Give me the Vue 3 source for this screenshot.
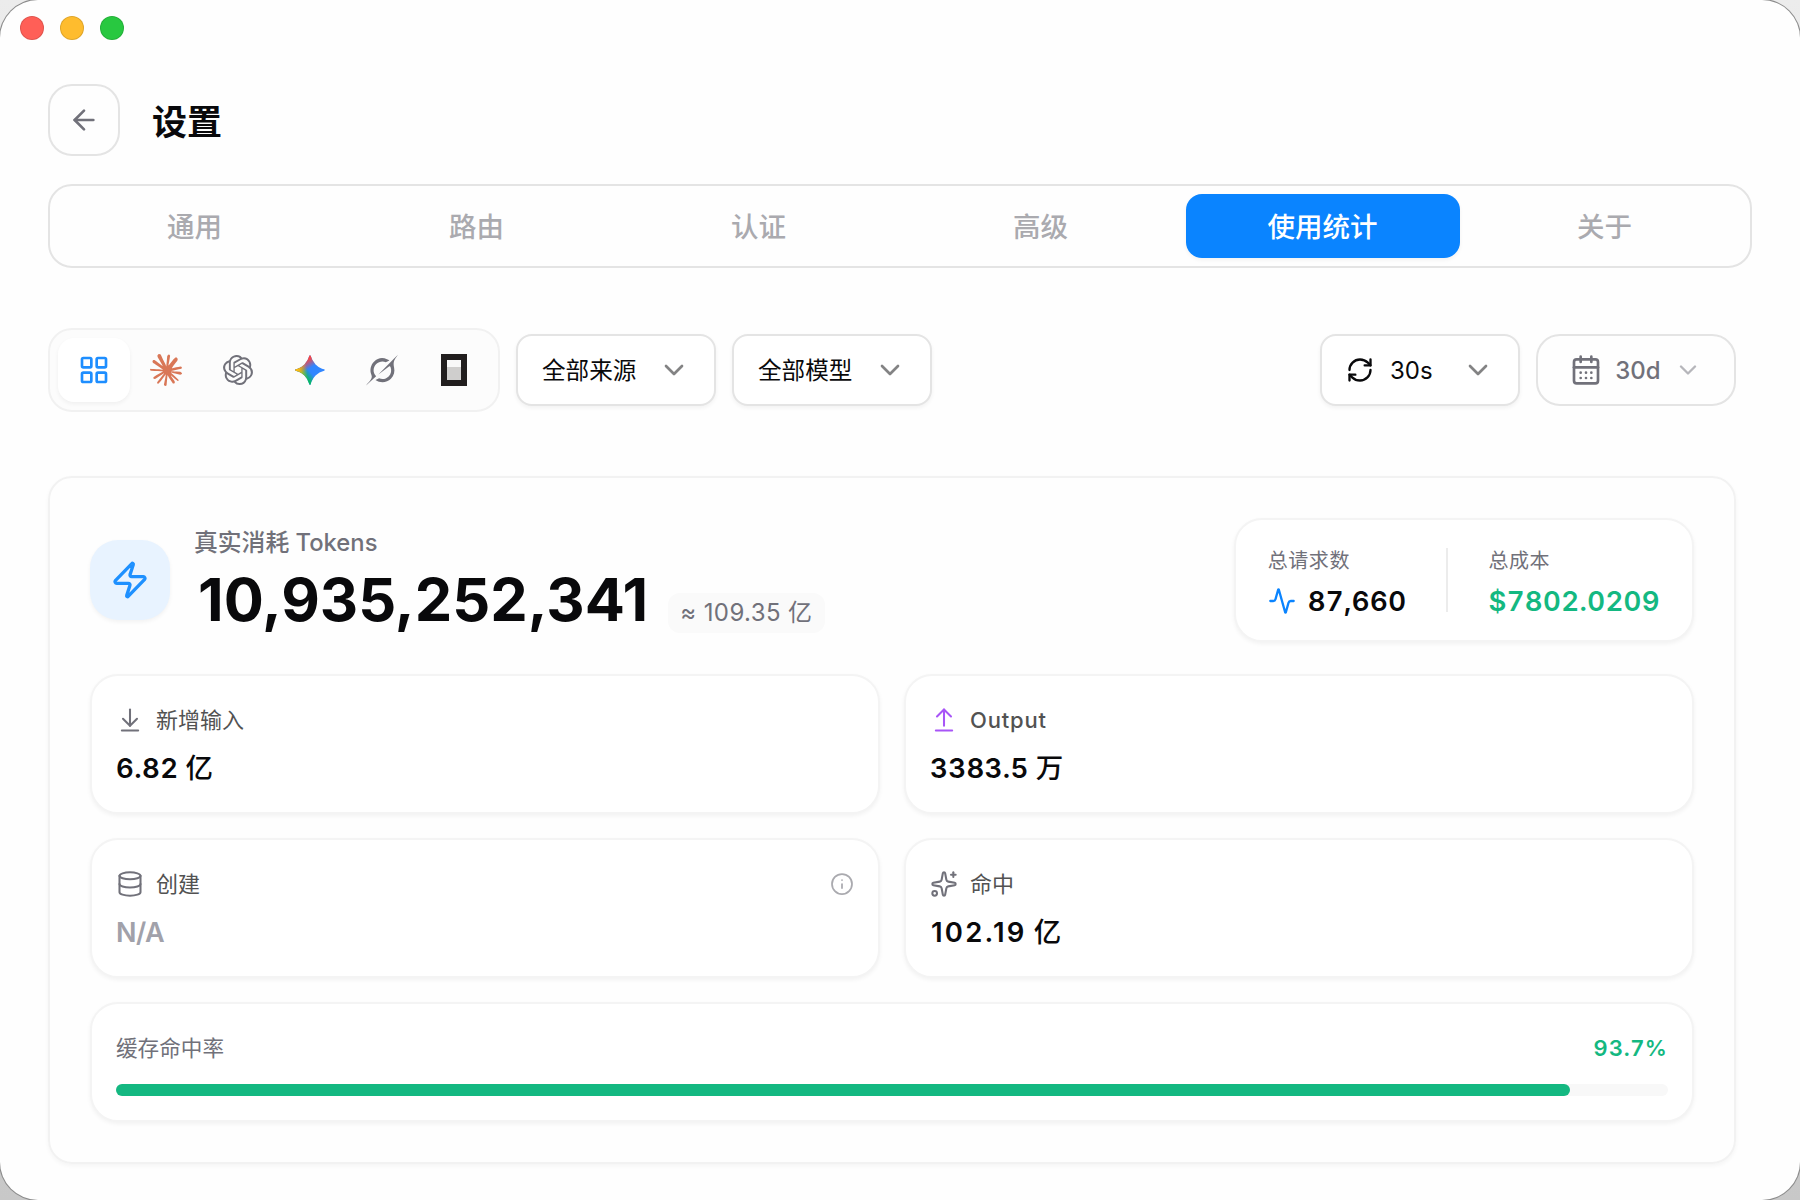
<template>
  <div class="desktop">
    <div class="window">
      <div class="titlebar">
        <span class="light red"></span>
        <span class="light yellow"></span>
        <span class="light green"></span>
      </div>

      <header class="header">
        <button class="back">
          <svg class="icon s32" viewBox="0 0 24 24">
            <path d="m12 19-7-7 7-7" />
            <path d="M19 12H5" />
          </svg>
        </button>
        <h1>设置</h1>
      </header>

      <nav class="tabs">
        <button
          v-for="tab in tabs"
          :key="tab"
          class="tab"
          :class="{ active: tab === activeTab }"
          @click="activeTab = tab"
        >
          {{ tab }}
        </button>
      </nav>

      <main class="content">
        <div class="toolbar">
          <div class="apps">
            <button class="app active">
              <svg class="icon s32" viewBox="0 0 24 24">
                <rect width="7" height="7" x="3" y="3" rx="1" />
                <rect width="7" height="7" x="14" y="3" rx="1" />
                <rect width="7" height="7" x="14" y="14" rx="1" />
                <rect width="7" height="7" x="3" y="14" rx="1" />
              </svg>
            </button>
            <button class="app">
              <svg class="brand claude" viewBox="0 0 24 24"><path :d="claudePath" /></svg>
            </button>
            <button class="app">
              <svg class="brand openai" viewBox="0 0 24 24"><path :d="openaiPath" /></svg>
            </button>
            <button class="app">
              <svg class="brand" viewBox="0 0 24 24">
                <defs>
                  <linearGradient id="gGreen" x1="7" y1="15.5" x2="11" y2="12" gradientUnits="userSpaceOnUse">
                    <stop stop-color="#08b962" />
                    <stop offset="1" stop-color="#08b962" stop-opacity="0" />
                  </linearGradient>
                  <linearGradient id="gRed" x1="8" y1="5.5" x2="11.5" y2="11" gradientUnits="userSpaceOnUse">
                    <stop stop-color="#f94543" />
                    <stop offset="1" stop-color="#f94543" stop-opacity="0" />
                  </linearGradient>
                  <linearGradient id="gYellow" x1="3.5" y1="13.5" x2="17.5" y2="12" gradientUnits="userSpaceOnUse">
                    <stop stop-color="#fabc12" />
                    <stop offset="0.46" stop-color="#fabc12" stop-opacity="0" />
                  </linearGradient>
                </defs>
                <path :d="geminiPath" fill="#3186ff" />
                <path :d="geminiPath" fill="url(#gGreen)" />
                <path :d="geminiPath" fill="url(#gRed)" />
                <path :d="geminiPath" fill="url(#gYellow)" />
              </svg>
            </button>
            <button class="app">
              <svg class="brand grok" viewBox="0 0 24 24"><path :d="grokPath" /></svg>
            </button>
            <button class="app">
              <svg class="brand" viewBox="0 0 32 32">
                <path d="M3 0h26v32H3z" fill="#211e1e" />
                <path d="M9 6h14v7H9z" fill="#f8f8f8" />
                <path d="M9 13h14v13H9z" fill="#cfcecd" />
              </svg>
            </button>
          </div>

          <button v-for="s in selects" :key="s" class="select">
            <span class="selectText">{{ s }}</span>
            <svg class="icon s32 chevron" viewBox="0 0 24 24"><path d="m6 9 6 6 6-6" /></svg>
          </button>

          <button class="select refresh">
            <svg class="icon s28" viewBox="0 0 24 24">
              <path d="M3 12a9 9 0 0 1 9-9 9.75 9.75 0 0 1 6.74 2.74L21 8" />
              <path d="M21 3v5h-5" />
              <path d="M21 12a9 9 0 0 1-9 9 9.75 9.75 0 0 1-6.74-2.74L3 16" />
              <path d="M8 16H3v5" />
            </svg>
            <span>30s</span>
            <svg class="icon s32 chevron" viewBox="0 0 24 24"><path d="m6 9 6 6 6-6" /></svg>
          </button>

          <button class="range">
            <svg class="icon s32" viewBox="0 0 24 24">
              <path d="M8 2v4M16 2v4" />
              <rect width="18" height="18" x="3" y="4" rx="2" />
              <path d="M3 10h18" />
              <path d="M8 14h.01M12 14h.01M16 14h.01M8 18h.01M12 18h.01M16 18h.01" />
            </svg>
            <span>30d</span>
            <svg class="icon s28 chevron" viewBox="0 0 24 24"><path d="m6 9 6 6 6-6" /></svg>
          </button>
        </div>

        <section class="panel">
          <div class="summary">
            <div class="zap">
              <svg class="icon s40" viewBox="0 0 24 24">
                <path
                  d="M4 14a1 1 0 0 1-.78-1.63l9.9-10.2a.5.5 0 0 1 .86.46l-1.92 6.02A1 1 0 0 0 13 10h7a1 1 0 0 1 .78 1.63l-9.9 10.2a.5.5 0 0 1-.86-.46l1.92-6.02A1 1 0 0 0 11 14z"
                />
              </svg>
            </div>
            <div class="total">
              <div class="totalLabel">真实消耗 Tokens</div>
              <div class="totalRow">
                <span class="totalValue">10,935,252,341</span>
                <span class="approx">≈ 109.35 亿</span>
              </div>
            </div>
            <div class="figures">
              <div class="figure">
                <div class="figureLabel">总请求数</div>
                <div class="figureValue">
                  <svg class="icon s28 blue" viewBox="0 0 24 24">
                    <path
                      d="M22 12h-2.48a2 2 0 0 0-1.93 1.46l-2.35 8.36a.25.25 0 0 1-.48 0L9.24 2.18a.25.25 0 0 0-.48 0l-2.35 8.36A2 2 0 0 1 4.49 12H2"
                    />
                  </svg>
                  <span>87,660</span>
                </div>
              </div>
              <div class="divider"></div>
              <div class="figure">
                <div class="figureLabel">总成本</div>
                <div class="figureValue cost">$7802.0209</div>
              </div>
            </div>
          </div>

          <div class="grid">
            <div v-for="card in cards" :key="card.label" class="card">
              <div class="cardLabel">
                <svg class="icon s28" :class="card.tone" viewBox="0 0 24 24">
                  <path v-for="d in card.paths" :key="d" :d="d" />
                </svg>
                <span :class="{ latin: card.label === 'Output' }">{{ card.label }}</span>
                <svg v-if="card.info" class="icon s24 info" viewBox="0 0 24 24">
                  <circle cx="12" cy="12" r="10" />
                  <path d="M12 16v-4" />
                  <path d="M12 8h.01" />
                </svg>
              </div>
              <div class="cardValue" :class="{ empty: !card.unit, wide: card.wide }">
                {{ card.value }}<span v-if="card.unit" class="unit">{{ card.unit }}</span>
              </div>
            </div>
          </div>

          <div class="card">
            <div class="rateRow">
              <span class="rateLabel">缓存命中率</span>
              <span class="rate">{{ hitRate }}%</span>
            </div>
            <div class="track">
              <div class="fill" :style="{ width: hitRate + '%' }"></div>
            </div>
          </div>
        </section>
      </main>
    </div>
  </div>
</template>

<script setup>
import { ref } from "vue";

const tabs = ["通用", "路由", "认证", "高级", "使用统计", "关于"];
const activeTab = ref("使用统计");
const selects = ["全部来源", "全部模型"];
const hitRate = ref(93.7);

const cards = [
  {
    label: "新增输入",
    value: "6.82",
    unit: "亿",
    paths: ["M12 17V3", "m6 11 6 6 6-6", "M19 21H5"],
  },
  {
    label: "Output",
    value: "3383.5",
    unit: "万",
    tone: "purple",
    paths: ["m18 9-6-6-6 6", "M12 3v14", "M5 21h14"],
  },
  {
    label: "创建",
    value: "N/A",
    info: true,
    paths: [
      "M3 5a9 3 0 1 0 18 0a9 3 0 1 0-18 0",
      "M3 5v14a9 3 0 0 0 18 0V5",
      "M3 12a9 3 0 0 0 18 0",
    ],
  },
  {
    label: "命中",
    value: "102.19",
    unit: "亿",
    wide: true,
    paths: [
      "M11.017 2.814a1 1 0 0 1 1.966 0l1.051 5.558a2 2 0 0 0 1.594 1.594l5.558 1.051a1 1 0 0 1 0 1.966l-5.558 1.051a2 2 0 0 0-1.594 1.594l-1.051 5.558a1 1 0 0 1-1.966 0l-1.051-5.558a2 2 0 0 0-1.594-1.594l-5.558-1.051a1 1 0 0 1 0-1.966l5.558-1.051a2 2 0 0 0 1.594-1.594z",
      "M20 2v4",
      "M22 4h-4",
      "M2 20a2 2 0 1 0 4 0a2 2 0 1 0-4 0",
    ],
  },
];

// 各应用图标
const claudePath =
  "m4.7144 15.9555 4.7174-2.6471.079-.2307-.079-.1275h-.2307l-.7893-.0486-2.6956-.0729-2.3375-.0971-2.2646-.1214-.5707-.1215-.5343-.7042.0546-.3522.4797-.3218.686.0608 1.5179.1032 2.2767.1578 1.6514.0972 2.4468.255h.3886l.0546-.1579-.1336-.0971-.1032-.0972L6.973 9.8356l-2.55-1.6879-1.3356-.9714-.7225-.4918-.3643-.4614-.1578-1.0078.6557-.7225.8803.0607.2246.0607.8925.686 1.9064 1.4754 2.4893 1.8336.3643.3035.1457-.1032.0182-.0728-.164-.2733-1.3539-2.4467-1.445-2.4893-.6435-1.032-.17-.6194c-.0607-.255-.1032-.4674-.1032-.7285L6.287.1335 6.6997 0l.9957.1336.419.3642.6192 1.4147 1.0018 2.2282 1.5543 3.0296.4553.8985.2429.8318.091.255h.1579v-.1457l.1275-1.706.2368-2.0947.2307-2.6957.0789-.7589.3764-.9107.7468-.4918.5828.2793.4797.686-.0668.4433-.2853 1.8517-.5586 2.9021-.3643 1.9429h.2125l.2429-.2429.9835-1.3053 1.6514-2.0643.7286-.8196.85-.9046.5464-.4311h1.0321l.759 1.1293-.34 1.1657-1.0625 1.3478-.8804 1.1414-1.2628 1.7-.7893 1.36.0729.1093.1882-.0183 2.8535-.607 1.5421-.2794 1.8396-.3157.8318.3886.091.3946-.3278.8075-1.967.4857-2.3072.4614-3.4364.8136-.0425.0304.0486.0607 1.5482.1457.6618.0364h1.621l3.0175.2247.7892.522.4736.6376-.079.4857-1.2142.6193-1.6393-.3886-3.825-.9107-1.3113-.3279h-.1822v.1093l1.0929 1.0686 2.0035 1.8092 2.5075 2.3314.1275.5768-.3218.4554-.34-.0486-2.2039-1.6575-.85-.7468-1.9246-1.621h-.1275v.17l.4432.6496 2.3436 3.5214.1214 1.0807-.17.3521-.6071.2125-.6679-.1214-1.3721-1.9246L14.38 17.959l-1.1414-1.9428-.1397.079-.674 7.2552-.3156.3703-.7286.2793-.6071-.4614-.3218-.7468.3218-1.4753.3886-1.9246.3157-1.53.2853-1.9004.17-.6314-.0121-.0425-.1397.0182-1.4328 1.9672-2.1796 2.9446-1.7243 1.8456-.4128.164-.7164-.3704.0667-.6618.4008-.5889 2.386-3.0357 1.4389-1.882.929-1.0868-.0062-.1579h-.0546l-6.3385 4.1164-1.1293.1457-.4857-.4554.0608-.7467.2307-.2429 1.9064-1.3114Z";
const openaiPath =
  "M22.2819 9.8211a5.9847 5.9847 0 0 0-.5157-4.9108 6.0462 6.0462 0 0 0-6.5098-2.9A6.0651 6.0651 0 0 0 4.9807 4.1818a5.9847 5.9847 0 0 0-3.9977 2.9 6.0462 6.0462 0 0 0 .7427 7.0966 5.98 5.98 0 0 0 .511 4.9107 6.051 6.051 0 0 0 6.5146 2.9001A5.9847 5.9847 0 0 0 13.2599 24a6.0557 6.0557 0 0 0 5.7718-4.2058 5.9894 5.9894 0 0 0 3.9977-2.9001 6.0557 6.0557 0 0 0-.7475-7.0729zm-9.022 12.6081a4.4755 4.4755 0 0 1-2.8764-1.0408l.1419-.0804 4.7783-2.7582a.7948.7948 0 0 0 .3927-.6813v-6.7369l2.02 1.1686a.071.071 0 0 1 .038.052v5.5826a4.504 4.504 0 0 1-4.4945 4.4944zm-9.6607-4.1254a4.4708 4.4708 0 0 1-.5346-3.0137l.142.0852 4.783 2.7582a.7712.7712 0 0 0 .7806 0l5.8428-3.3685v2.3324a.0804.0804 0 0 1-.0332.0615L9.74 19.9502a4.4992 4.4992 0 0 1-6.1408-1.6464zM2.3408 7.8956a4.485 4.485 0 0 1 2.3655-1.9728V11.6a.7664.7664 0 0 0 .3879.6765l5.8144 3.3543-2.0201 1.1685a.0757.0757 0 0 1-.071 0l-4.8303-2.7865A4.504 4.504 0 0 1 2.3408 7.872zm16.5963 3.8558L13.1038 8.364 15.1192 7.2a.0757.0757 0 0 1 .071 0l4.8303 2.7913a4.4944 4.4944 0 0 1-.6765 8.1042v-5.6772a.79.79 0 0 0-.407-.667zm2.0107-3.0231l-.142-.0852-4.7735-2.7818a.7759.7759 0 0 0-.7854 0L9.409 9.2297V6.8974a.0662.0662 0 0 1 .0284-.0615l4.8303-2.7866a4.4992 4.4992 0 0 1 6.6802 4.66zM8.3065 12.863l-2.02-1.1638a.0804.0804 0 0 1-.038-.0567V6.0742a4.4992 4.4992 0 0 1 7.3757-3.4537l-.142.0805L8.704 5.459a.7948.7948 0 0 0-.3927.6813zm1.0976-2.3654l2.602-1.4998 2.6069 1.4998v2.9994l-2.5974 1.4997-2.6067-1.4997Z";
const geminiPath =
  "M20.616 10.835a14.147 14.147 0 01-4.45-3.001 14.111 14.111 0 01-3.678-6.452.503.503 0 00-.975 0 14.134 14.134 0 01-3.679 6.452 14.155 14.155 0 01-4.45 3.001c-.65.28-1.318.505-2.002.678a.502.502 0 000 .975c.684.172 1.35.397 2.002.677a14.147 14.147 0 014.45 3.001 14.112 14.112 0 013.679 6.453.502.502 0 00.975 0c.172-.685.397-1.351.677-2.003a14.145 14.145 0 013.001-4.45 14.113 14.113 0 016.453-3.678.503.503 0 000-.975 13.245 13.245 0 01-2.003-.678z";
const grokPath =
  "M9.27 15.29l7.978-5.897c.391-.29.95-.177 1.137.272.98 2.369.542 5.215-1.41 7.169-1.951 1.954-4.667 2.382-7.149 1.406l-2.711 1.257c3.889 2.661 8.611 2.003 11.562-.953 2.341-2.344 3.066-5.539 2.388-8.42l.006.007c-.983-4.232.242-5.924 2.75-9.383.06-.082.12-.164.179-.248l-3.301 3.305v-.01L9.267 15.292M7.623 16.723c-2.792-2.67-2.31-6.801.071-9.184 1.761-1.763 4.647-2.483 7.166-1.425l2.705-1.25a7.808 7.808 0 00-1.829-1A8.975 8.975 0 005.984 5.83c-2.533 2.536-3.33 6.436-1.962 9.764 1.022 2.487-.653 4.246-2.34 6.022-.599.63-1.199 1.259-1.682 1.925l7.62-6.815";
</script>

<style>
body {
  margin: 0;
}
</style>

<style scoped>
.desktop {
  width: 1800px;
  height: 1200px;
  overflow: hidden;
  background: linear-gradient(#ececec 0%, #c8c8c8 100%);
  font-family: Inter, "Noto Sans CJK SC", sans-serif;
  color: #09090b;
}

.window {
  box-sizing: border-box;
  height: 1200px;
  padding: 0 48px;
  background: #fefefe;
  border-radius: 38px;
  box-shadow: 0 0 0 1px #8c8c8c;
}

button {
  box-sizing: border-box;
  margin: 0;
  padding: 0;
  border: none;
  background: none;
  font: inherit;
  color: inherit;
  display: flex;
  align-items: center;
  justify-content: center;
}

.icon {
  flex: none;
  fill: none;
  stroke: currentColor;
  stroke-width: 2;
  stroke-linecap: round;
  stroke-linejoin: round;
}

.s24 {
  width: 24px;
  height: 24px;
}

.s28 {
  width: 28px;
  height: 28px;
}

.s32 {
  width: 32px;
  height: 32px;
}

.s40 {
  width: 40px;
  height: 40px;
}

.titlebar {
  height: 68px;
  padding-top: 16px;
  margin-left: -28px;
  display: flex;
  gap: 16px;
}

.light {
  box-sizing: border-box;
  width: 24px;
  height: 24px;
  border-radius: 50%;
  border: 1px solid rgba(0, 0, 0, 0.12);
}

.red {
  background: #ff5f57;
}

.yellow {
  background: #febc2e;
}

.green {
  background: #28c840;
}

.header {
  display: flex;
  align-items: center;
  gap: 32px;
  height: 72px;
}

.back {
  width: 72px;
  height: 72px;
  border: 2px solid #e4e4e4;
  border-radius: 24px;
  color: #71717a;
}

h1 {
  margin: 0;
  padding-top: 4px;
  font-size: 35px;
  font-weight: 600;
  line-height: 48px;
}

.tabs {
  margin-top: 28px;
  padding: 8px;
  display: grid;
  grid-template-columns: repeat(6, 1fr);
  gap: 8px;
  border: 2px solid #e4e4e4;
  border-radius: 24px;
}

.tab {
  height: 64px;
  padding: 0 1px 2px 0;
  border-radius: 16px;
  font-size: 27.5px;
  font-weight: 500;
  color: #aaaaaf;
}

.tab.active {
  background: #0a84ff;
  color: #fff;
  box-shadow: 0 2px 4px rgba(0, 0, 0, 0.05);
}

.content {
  padding: 60px 16px 0 0;
}

.toolbar {
  display: flex;
  align-items: center;
  gap: 16px;
}

.apps {
  display: flex;
  padding: 8px;
  border: 2px solid #f1f1f1;
  border-radius: 24px;
  background: #fcfcfc;
}

.app {
  width: 72px;
  height: 64px;
  border-radius: 16px;
  color: #71717a;
}

.app.active {
  background: #fff;
  color: #1e8eff;
  box-shadow: 0 2px 4px rgba(0, 0, 0, 0.05);
}

.brand {
  width: 32px;
  height: 32px;
  fill: currentColor;
}

.claude {
  color: #d97757;
}

.openai {
  width: 30px;
  height: 30px;
}

.select,
.range {
  width: 200px;
  height: 72px;
  border: 2px solid #e4e4e4;
  font-size: 24px;
}

.select {
  padding: 0 24px;
  justify-content: space-between;
  border-radius: 16px;
  background: #fff;
  box-shadow: 0 2px 4px rgba(0, 0, 0, 0.05);
}

.selectText {
  padding-bottom: 3px;
  font-size: 23.6px;
}

.chevron {
  opacity: 0.5;
}

.refresh {
  margin-left: auto;
}

.refresh span {
  margin: 0 auto 0 16px;
}

.range {
  gap: 13px;
  border-radius: 24px;
  font-weight: 500;
  color: #71717a;
}

.panel {
  margin-top: 64px;
  padding: 40px;
  display: flex;
  flex-direction: column;
  gap: 24px;
  border: 2px solid #f2f2f2;
  border-radius: 24px;
  box-shadow: 0 2px 4px rgba(0, 0, 0, 0.04);
}

.summary {
  display: flex;
  align-items: center;
  height: 124px;
  margin-bottom: 8px;
}

.zap {
  width: 80px;
  height: 80px;
  display: flex;
  align-items: center;
  justify-content: center;
  border-radius: 28px;
  background: #e8f3ff;
  color: #1e90ff;
  box-shadow: 0 2px 4px rgba(0, 0, 0, 0.05);
}

.total {
  margin-left: 24px;
  padding-bottom: 4px;
}

.totalLabel {
  font-size: 23.8px;
  font-weight: 500;
  line-height: 32px;
  color: #71717a;
}

.totalRow {
  display: flex;
  align-items: flex-end;
  gap: 20px;
  margin-top: 10px;
}

.totalValue {
  padding-left: 4px;
  font-size: 59.5px;
  font-weight: 700;
  line-height: 60px;
}

.approx {
  margin-bottom: -4px;
  padding: 0 12px;
  border-radius: 12px;
  background: #fafafa;
  font-size: 24px;
  line-height: 40px;
  letter-spacing: 0.4px;
  color: #71717a;
}

.figures {
  box-sizing: border-box;
  height: 124px;
  margin-left: auto;
  padding: 0 32px;
  display: flex;
  align-items: center;
  border: 2px solid #f4f4f4;
  border-radius: 28px;
  background: #fff;
  box-shadow: 0 2px 4px rgba(0, 0, 0, 0.05);
}

.figure {
  padding-top: 6px;
}

.figureLabel {
  font-size: 20px;
  font-weight: 400;
  line-height: 30px;
  letter-spacing: 0.6px;
  color: #71717a;
}

.figureValue {
  display: flex;
  align-items: center;
  gap: 12px;
  margin-top: 5px;
  font-size: 27.5px;
  font-weight: 600;
  line-height: 40px;
  letter-spacing: 0.4px;
  font-variant-numeric: tabular-nums;
}

.blue {
  color: #0a84ff;
}

.cost {
  color: #14b881;
}

.divider {
  width: 2px;
  height: 64px;
  margin: 0 40px;
  background: #ececec;
}

.grid {
  display: grid;
  grid-template-columns: 1fr 1fr;
  gap: 24px;
}

.card {
  padding: 24px;
  border: 2px solid #f4f4f4;
  border-radius: 28px;
  background: #fff;
  box-shadow: 0 2px 4px rgba(0, 0, 0, 0.05);
}

.cardLabel {
  height: 40px;
  display: flex;
  align-items: center;
  gap: 12px;
  font-size: 22px;
  color: #525252;
}

.cardLabel span {
  padding-bottom: 4px;
}

.cardLabel .latin {
  padding-bottom: 0;
  font-weight: 500;
  letter-spacing: 0.8px;
}

.cardLabel .icon {
  stroke-width: 1.75;
  color: #71717a;
}

.cardLabel .purple {
  color: #a855f7;
}

.cardLabel .info {
  margin-left: auto;
  color: #aaaaaf;
}

.cardValue {
  padding-top: 1px;
  margin-top: 8px;
  font-size: 27.5px;
  font-weight: 600;
  line-height: 39px;
  letter-spacing: 0.4px;
  font-variant-numeric: tabular-nums;
}

.cardValue.wide {
  padding-left: 1px;
  letter-spacing: 2.2px;
  font-variant-numeric: normal;
}

.unit {
  margin-left: 7px;
  font-weight: 500;
}

.cardValue.empty {
  color: #a1a1aa;
  font-size: 27px;
  letter-spacing: -0.5px;
}

.rateRow {
  height: 40px;
  display: flex;
  align-items: center;
  justify-content: space-between;
  font-size: 22px;
  color: #71717a;
}

.rateLabel {
  padding-bottom: 3px;
  font-size: 21.6px;
}

.rate {
  font-weight: 600;
  letter-spacing: 1.1px;
  color: #14b881;
}

.track {
  height: 12px;
  margin-top: 16px;
  border-radius: 6px;
  background: #f8f8f8;
}

.fill {
  height: 12px;
  border-radius: 6px;
  background: #14b881;
}
</style>
